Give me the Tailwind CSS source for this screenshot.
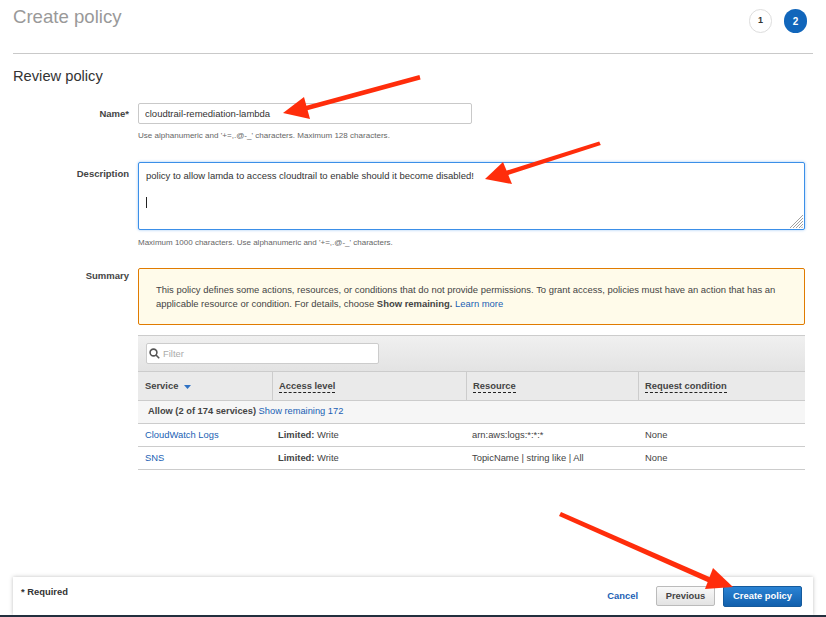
<!DOCTYPE html>
<html lang="en">
<head>
    <meta charset="UTF-8">
    <title>Create policy</title>
    <script src="https://cdn.jsdelivr.net/npm/@tailwindcss/browser@4"></script>
</head>
<body class="bg-white">
<div class="relative w-[826px] h-[617px] overflow-hidden flex flex-col font-['Liberation_Sans',Arial,sans-serif] text-[#444]">

    <!-- Page header -->
    <div class="mx-[13px] h-[54px] shrink-0 border-b border-[#c9c9c9] flex justify-between items-start">
        <h1 class="text-[18.6px] leading-[24px] mt-[5px] text-[#999]">Create policy</h1>
        <div class="flex gap-[12px] mt-[9px] mr-[6px]">
            <div class="w-[23px] h-[24px] rounded-full border border-[#ddd] bg-white text-[9px] font-bold text-[#333] flex items-center justify-center">1</div>
            <div class="w-[23px] h-[24px] rounded-full bg-[#1166bb] text-[10px] font-bold text-white flex items-center justify-center">2</div>
        </div>
    </div>

    <h2 class="mx-[13px] mt-[13px] text-[14.7px] leading-[18px] text-[#333]">Review policy</h2>

    <!-- Name -->
    <div class="flex mt-[18px] shrink-0">
        <label class="w-[129px] text-right text-[9.5px] leading-[22px] font-bold text-[#444]">Name*</label>
        <div class="ml-[9px]">
            <input type="text" value="cloudtrail-remediation-lambda" class="block w-[334px] h-[21px] border border-[#c9c9c9] rounded-[2px] px-[6px] text-[9.5px] text-[#333] bg-white">
            <p class="mt-[6px] text-[8.05px] leading-[11px] text-[#666]">Use alphanumeric and '+=,.@-_' characters. Maximum 128 characters.</p>
        </div>
    </div>

    <!-- Description -->
    <div class="flex mt-[21px] shrink-0">
        <label class="w-[129px] text-right text-[9.5px] leading-[24px] font-bold text-[#444]">Description</label>
        <div class="ml-[9px]">
            <div class="relative w-[667px] h-[68px]">
                <textarea class="block w-full h-full resize-none border border-[#3b8fe8] rounded-[2px] shadow-[0_0_3px_#9cc6f2] px-[7px] py-[6px] text-[9.5px] leading-[14px] text-[#333] bg-white outline-none">policy to allow lamda to access cloudtrail to enable should it become disabled!</textarea>
                <span class="absolute left-[8px] top-[35px] w-px h-[11px] bg-[#222]"></span>
                <svg class="absolute right-[2px] bottom-[2px]" width="13" height="13" viewBox="0 0 13 13" fill="none" stroke="#888" stroke-width="0.8">
                    <path d="M0 13L13 0M3 13L13 3M6 13L13 6M9 13L13 9M11.5 13L13 11.5"/>
                </svg>
            </div>
            <p class="mt-[7px] text-[8px] leading-[11px] text-[#666]">Maximum 1000 characters. Use alphanumeric and '+=,.@-_' characters.</p>
        </div>
    </div>

    <!-- Summary -->
    <div class="flex mt-[20px] shrink-0">
        <label class="w-[129px] text-right text-[9.5px] leading-[16px] font-bold text-[#444]">Summary</label>
        <div class="ml-[9px] w-[667px]">
            <div class="h-[57px] border border-[#e07b00] rounded-[2px] bg-[#fffbea] pl-[17px] pr-[10px] pt-[14px] text-[9.45px] leading-[14px] text-[#444]">
                <span class="block whitespace-nowrap">This policy defines some actions, resources, or conditions that do not provide permissions. To grant access, policies must have an action that has an</span>
                <span class="block whitespace-nowrap">applicable resource or condition. For details, choose <b>Show remaining.</b> <a href="#" class="text-[#1a5fb4]">Learn more</a></span>
            </div>

            <!-- Services table -->
            <div class="mt-[10px] text-[9.4px]">
                <div class="h-[36px] border-t border-[#ccc] bg-linear-to-b from-[#f0f0f0] to-[#e3e3e3] flex items-center pl-[8px]">
                    <div class="relative w-[233px]">
                        <svg class="absolute left-[3px] top-[5px]" width="11" height="11" viewBox="0 0 11 11" fill="none" stroke="#555" stroke-width="1.6">
                            <circle cx="4.5" cy="4.5" r="3.4"/><path d="M7 7l3.2 3.2"/>
                        </svg>
                        <input type="text" placeholder="Filter" class="block w-full h-[21px] border border-[#ccc] rounded-[2px] bg-white pl-[16px] text-[9.4px] placeholder:text-[#aaa]">
                    </div>
                </div>
                <div class="grid grid-cols-[134px_194px_172px_167px] h-[30px] bg-[#eaeaea] border-y border-[#ccc] font-bold text-[#444] items-stretch">
                    <div class="flex items-center pl-[7px] gap-[6px] pt-[1px]">Service
                        <svg width="7" height="4" viewBox="0 0 7 4"><path d="M0 0h7L3.5 4z" fill="#2f72c4"/></svg>
                    </div>
                    <div class="flex items-center pl-[6px] border-l border-[#ccc]"><span class="border-b border-dashed border-[#222] leading-[12px]">Access level</span></div>
                    <div class="flex items-center pl-[6px] border-l border-[#ccc]"><span class="border-b border-dashed border-[#222] leading-[12px]">Resource</span></div>
                    <div class="flex items-center pl-[6px] border-l border-[#ccc]"><span class="border-b border-dashed border-[#222] leading-[12px]">Request condition</span></div>
                </div>
                <div class="h-[23px] bg-[#f6f6f6] border-b border-[#ccc] flex items-center pl-[10px] text-[9.3px]">
                    <b>Allow (2 of 174 services)</b>&nbsp;<a href="#" class="text-[#1a5fb4]">Show remaining 172</a>
                </div>
                <div class="grid grid-cols-[135px_193px_172px_167px] h-[23px] border-b border-[#ccc] items-center pt-[1px]">
                    <a href="#" class="pl-[7px] text-[#1a5fb4]">CloudWatch Logs</a>
                    <div class="pl-[5px]"><b>Limited:</b> Write</div>
                    <div class="pl-[6px]">arn:aws:logs:*:*:*</div>
                    <div class="pl-[7px]">None</div>
                </div>
                <div class="grid grid-cols-[135px_193px_172px_167px] h-[23px] border-b border-[#ccc] items-center pt-[1px]">
                    <a href="#" class="pl-[7px] text-[#1a5fb4]">SNS</a>
                    <div class="pl-[5px]"><b>Limited:</b> Write</div>
                    <div class="pl-[6px]">TopicName | string like | All</div>
                    <div class="pl-[7px]">None</div>
                </div>
            </div>
        </div>
    </div>

    <!-- Footer bar -->
    <div class="mt-auto mx-[13px] h-[38px] shrink-0 bg-white shadow-[0_0_4px_rgba(0,0,0,0.25)] flex items-center pl-[8px] pr-[11px] text-[9.4px] font-bold">
        <span class="text-[#333] -mt-[7px]">* Required</span>
        <a href="#" class="ml-auto text-[#1a5fb4]">Cancel</a>
        <button class="ml-[18px] w-[59px] h-[20px] rounded-[2px] border border-[#bbb] bg-linear-to-b from-[#f9f9f9] to-[#e3e3e3] text-[#444]">Previous</button>
        <button class="ml-[8px] w-[79px] h-[21px] rounded-[2px] border border-[#155a9c] bg-linear-to-b from-[#2a83d4] to-[#1160ad] text-white">Create policy</button>
    </div>
    <div class="h-[2px] shrink-0 bg-[#232f3e]"></div>

    <!-- Red annotation arrows -->
    <svg class="absolute inset-0 pointer-events-none" width="826" height="617" viewBox="0 0 826 617" fill="#ff2d0b" stroke="none">
        <path d="M419.4 75 L420.6 79.4 L301 112 L299.8 107.6Z"/>
        <path d="M283 113 L304 97 L310 119Z"/>
        <path d="M599.2 141.6 L600.8 145 L505 176 L503.6 171.6Z"/>
        <path d="M485 179 L503 162 L512 184Z"/>
        <path d="M561 512 L559 516 L712 584 L714 579Z"/>
        <path d="M733 587 L713 568 L705 589Z"/>
    </svg>
</div>
</body>
</html>
